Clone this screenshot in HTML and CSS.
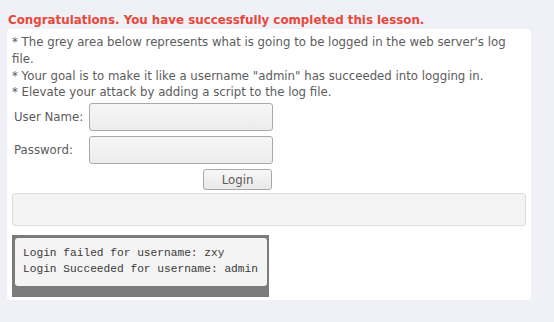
FILE: index.html
```html
<!DOCTYPE html>
<html lang="en">
<head>
  <meta charset="UTF-8" />
  <meta name="viewport" content="width=device-width, initial-scale=1.0"/>
  <title>Log Spoofing</title>
  <link rel="stylesheet" href="styles.css">
</head>
<body>
  <div class="success">Congratulations. You have successfully completed this lesson.</div>
  <div class="card">
    <div class="info">
      * The grey area below represents what is going to be logged in the web server's log file.<br>
      * Your goal is to make it like a username "admin" has succeeded into logging in.<br>
      * Elevate your attack by adding a script to the log file.
    </div>
    <form class="login">
      <div class="row">
        <label for="username">User Name:</label>
        <input type="text" id="username">
      </div>
      <div class="row">
        <label for="password">Password:</label>
        <input type="password" id="password">
      </div>
      <div class="actions">
        <button type="button">Login</button>
      </div>
    </form>
    <div class="feedback"></div>
    <div class="log">
      <div class="log-text">Login failed for username: zxy<br>Login Succeeded for username: admin</div>
    </div>
  </div>
</body>
</html>
```

FILE: styles.css
```css
body {
  margin: 0;
  background-color: #f0f1f6;
  font-family: "DejaVu Sans", sans-serif;
  font-size: 11.75px;
}

.success {
  color: #e8473b;
  font-weight: bold;
  margin: 13px 0 0 8px;
  height: 16px;
  font-size: 11.85px;
}

.card {
  width: 524px;
  height: 271px;
  margin-left: 7px;
  background-color: white;
  border-radius: 4px;
  padding: 5px 5px 0 5px;
  box-sizing: border-box;
  color: #5c5c5c;
}

.info {
  line-height: 16.8px;
}

.login {
  margin: 0;
}

.row {
  display: flex;
  align-items: center;
  height: 33px;
}

.row:first-child {
  margin-top: -1px;
}

.row label {
  width: 75px;
  padding-left: 2px;
}

.row input {
  width: 184px;
  height: 28px;
  box-sizing: border-box;
  border: 1px solid #a9a9a9;
  border-radius: 3px;
  background: linear-gradient(#f6f6f6, #ececec);
}

.actions {
  width: 260px;
  display: flex;
  justify-content: flex-end;
  margin-top: 3px;
}

.actions button {
  width: 69px;
  height: 21px;
  padding: 0;
  font-family: "DejaVu Sans", sans-serif;
  font-size: 11.75px;
  color: #5c5c5c;
  border: 1px solid #a9a9a9;
  border-radius: 3px;
  background: linear-gradient(#f8f8f8, #e8e8e8);
}

.feedback {
  width: 514px;
  height: 33px;
  margin-top: 3px;
  box-sizing: border-box;
  border: 1px solid #dcdcdc;
  border-radius: 3px;
  background-color: #f4f4f4;
}

.log {
  width: 257px;
  height: 62px;
  margin-top: 9px;
  box-sizing: border-box;
  padding: 3px 2px 11px 3px;
  background-color: #7b7b7b;
}

.log-text {
  height: 100%;
  box-sizing: border-box;
  padding: 7px 0 0 8px;
  background-color: #f4f4f4;
  border-radius: 3px;
  font-family: "Liberation Mono", monospace;
  font-size: 11.2px;
  line-height: 16px;
  color: #3a3a3a;
}
```
